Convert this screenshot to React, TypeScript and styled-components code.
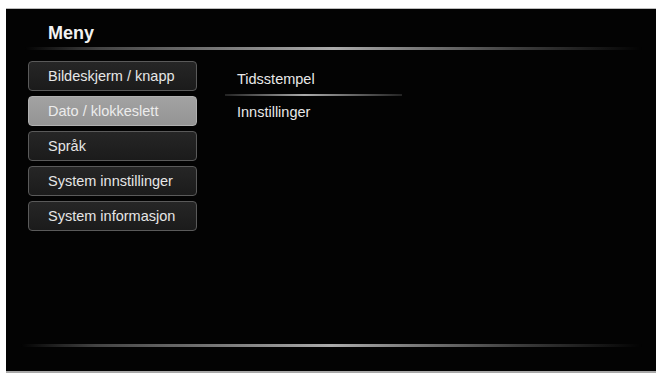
import React from 'react';
import styled, { createGlobalStyle } from 'styled-components';

const GlobalStyle = createGlobalStyle`
  html, body {
    margin: 0;
    padding: 0;
    background: #ffffff;
  }
  body {
    font-family: "Liberation Sans", Arial, sans-serif;
  }
`;

const Screen = styled.div`
  margin: 8px 0 0 6px;
  width: 650px;
  height: 365px;
  background: #030303;
  border-top: 1px solid #bdbdbd;
  border-bottom: 2px solid #a8a8a8;
  box-sizing: border-box;
  display: flex;
  flex-direction: column;
`;

const Header = styled.div`
  height: 38px;
  padding: 0 0 3px 42px;
  box-sizing: border-box;
  display: flex;
  align-items: flex-end;
`;

const Title = styled.h1`
  margin: 0;
  font-size: 18px;
  font-weight: bold;
  color: #f2f2f2;
`;

const Glow = styled.div<{ $left: number; $right: number; $peak: number }>`
  height: 3px;
  margin: 0 ${(p) => p.$right}px 0 ${(p) => p.$left}px;
  background: linear-gradient(
    to right,
    rgba(150, 150, 150, 0) 0%,
    rgba(120, 120, 120, 0.55) 12%,
    rgba(190, 190, 190, 0.9) ${(p) => p.$peak}%,
    rgba(120, 120, 120, 0.5) 80%,
    rgba(150, 150, 150, 0) 100%
  );
  filter: blur(0.5px);
`;

const Body = styled.div`
  flex: 1;
  display: flex;
  padding: 11px 0 0 22px;
`;

const SideMenu = styled.div`
  width: 169px;
  display: flex;
  flex-direction: column;
  gap: 5px;
`;

const MenuButton = styled.div<{ $active?: boolean }>`
  height: 30px;
  box-sizing: border-box;
  padding-left: 19px;
  display: flex;
  align-items: center;
  border-radius: 4px;
  border: 1px solid ${(p) => (p.$active ? '#b0b0b0' : '#5a5a5a')};
  background: ${(p) =>
    p.$active
      ? 'linear-gradient(to bottom, #a2a2a2, #949494)'
      : 'linear-gradient(to bottom, #262626, #1b1b1b)'};
  color: ${(p) => (p.$active ? '#ececec' : '#e6e6e6')};
  font-size: 14.5px;
`;

const SubMenu = styled.div`
  margin-left: 28px;
  padding-top: 2px;
  width: 177px;
  display: flex;
  flex-direction: column;
`;

const SubItem = styled.div`
  height: 31px;
  padding-left: 12px;
  display: flex;
  align-items: center;
  color: #e8e8e8;
  font-size: 14.5px;
`;

const SubDivider = styled.div`
  height: 2px;
  background: linear-gradient(
    to right,
    rgba(160, 160, 160, 0.2),
    rgba(200, 200, 200, 0.85) 45%,
    rgba(160, 160, 160, 0.2)
  );
`;

const Footer = styled.div`
  padding-bottom: 24px;
`;

const menuItems = [
  'Bildeskjerm / knapp',
  'Dato / klokkeslett',
  'Språk',
  'System innstillinger',
  'System informasjon',
];

const App = (): JSX.Element => (
  <>
    <GlobalStyle />
    <Screen>
      <Header>
        <Title>Meny</Title>
      </Header>
      <Glow $left={19} $right={14} $peak={50} />
      <Body>
        <SideMenu>
          {menuItems.map((item, i) => (
            <MenuButton key={item} $active={i === 1}>
              {item}
            </MenuButton>
          ))}
        </SideMenu>
        <SubMenu>
          <SubItem>Tidsstempel</SubItem>
          <SubDivider />
          <SubItem>Innstillinger</SubItem>
        </SubMenu>
      </Body>
      <Footer>
        <Glow $left={15} $right={14} $peak={50} />
      </Footer>
    </Screen>
  </>
);

export default App;
